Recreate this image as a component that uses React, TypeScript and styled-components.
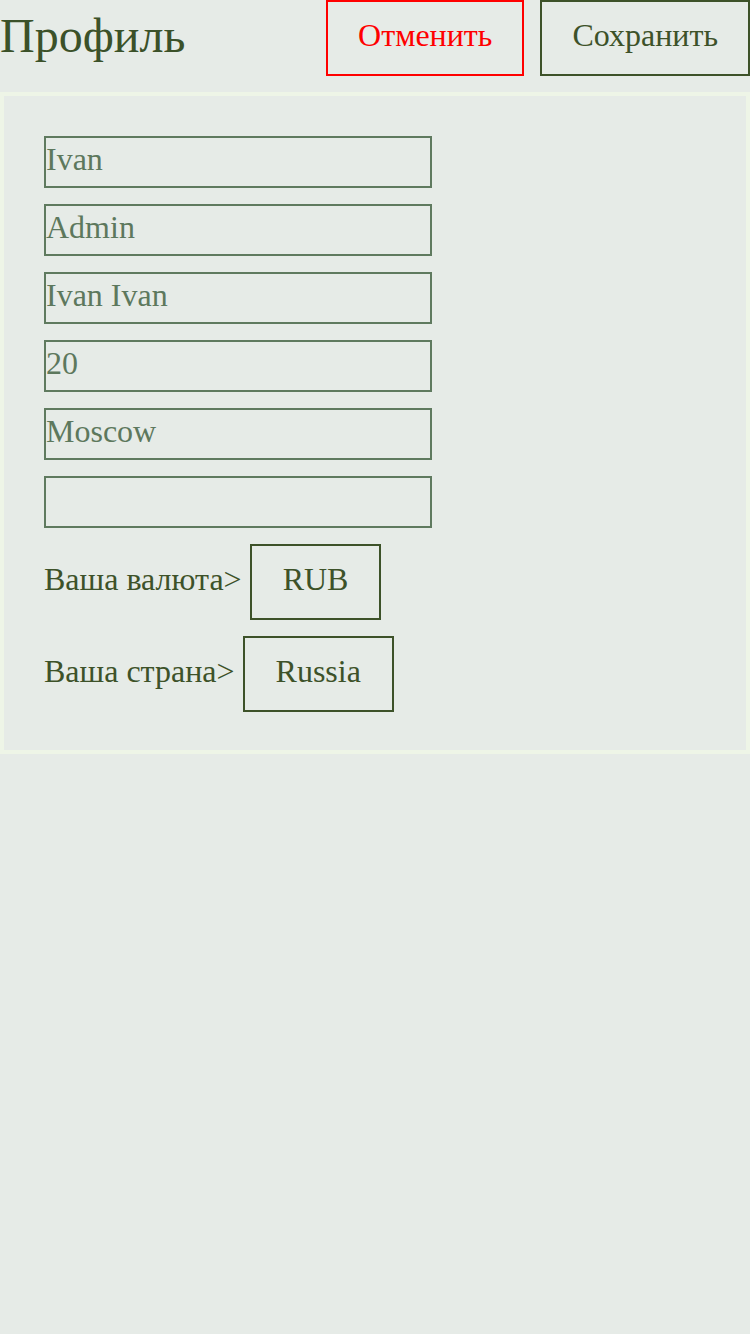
import React from "react";
import styled, { createGlobalStyle } from "styled-components";

const Global = createGlobalStyle`
  html, body {
    margin: 0;
    padding: 0;
    background: #e6ebe7;
    font-family: "Liberation Serif", "Times New Roman", serif;
  }
  * { box-sizing: border-box; }
`;

const Page = styled.div`
  display: flex;
  flex-direction: column;
  gap: 16px;
  width: 750px;
  min-height: 1334px;
  background: #e6ebe7;
`;

const Header = styled.header`
  display: flex;
  align-items: flex-start;
  justify-content: space-between;
`;

const Title = styled.h1`
  margin: 0;
  padding-top: 8px;
  font-size: 48px;
  font-weight: 400;
  line-height: 1.15;
  color: #3b5129;
`;

const Actions = styled.div`
  display: flex;
  gap: 16px;
`;

const Button = styled.button<{ $danger?: boolean }>`
  height: 76px;
  padding: 0 30px 6px;
  background: transparent;
  border: 2px solid ${(p) => (p.$danger ? "#ff0000" : "#3d5229")};
  color: ${(p) => (p.$danger ? "#ff0000" : "#3d5229")};
  font-family: "Liberation Serif", "Times New Roman", serif;
  font-size: 32px;
  cursor: pointer;
`;

const ChoiceButton = styled(Button)`
  padding: 0 31px 6px;
`;

const Card = styled.section`
  display: flex;
  flex-direction: column;
  align-items: flex-start;
  gap: 16px;
  border: 4px solid #eef5e7;
  padding: 40px 40px 38px;
`;

const Input = styled.input`
  width: 388px;
  height: 52px;
  padding: 0 0 6px;
  border: 2px solid #5f7a5f;
  background: transparent;
  color: #5d785d;
  font-family: "Liberation Serif", "Times New Roman", serif;
  font-size: 32px;
  outline: none;
`;

const SelectRow = styled.div`
  display: flex;
  align-items: center;
  gap: 8px;
`;

const Label = styled.span`
  padding-bottom: 6px;
  font-size: 32px;
  color: #3d5229;
`;

const fields = ["Ivan", "Admin", "Ivan Ivan", "20", "Moscow", ""];

export default function App() {
  return (
    <>
      <Global />
      <Page>
        <Header>
          <Title>Профиль</Title>
          <Actions>
            <Button $danger>Отменить</Button>
            <Button>Сохранить</Button>
          </Actions>
        </Header>
        <Card>
          {fields.map((v, i) => (
            <Input key={i} defaultValue={v} />
          ))}
          <SelectRow>
            <Label>Ваша валюта&gt;</Label>
            <ChoiceButton>RUB</ChoiceButton>
          </SelectRow>
          <SelectRow>
            <Label>Ваша страна&gt;</Label>
            <ChoiceButton>Russia</ChoiceButton>
          </SelectRow>
        </Card>
      </Page>
    </>
  );
}
